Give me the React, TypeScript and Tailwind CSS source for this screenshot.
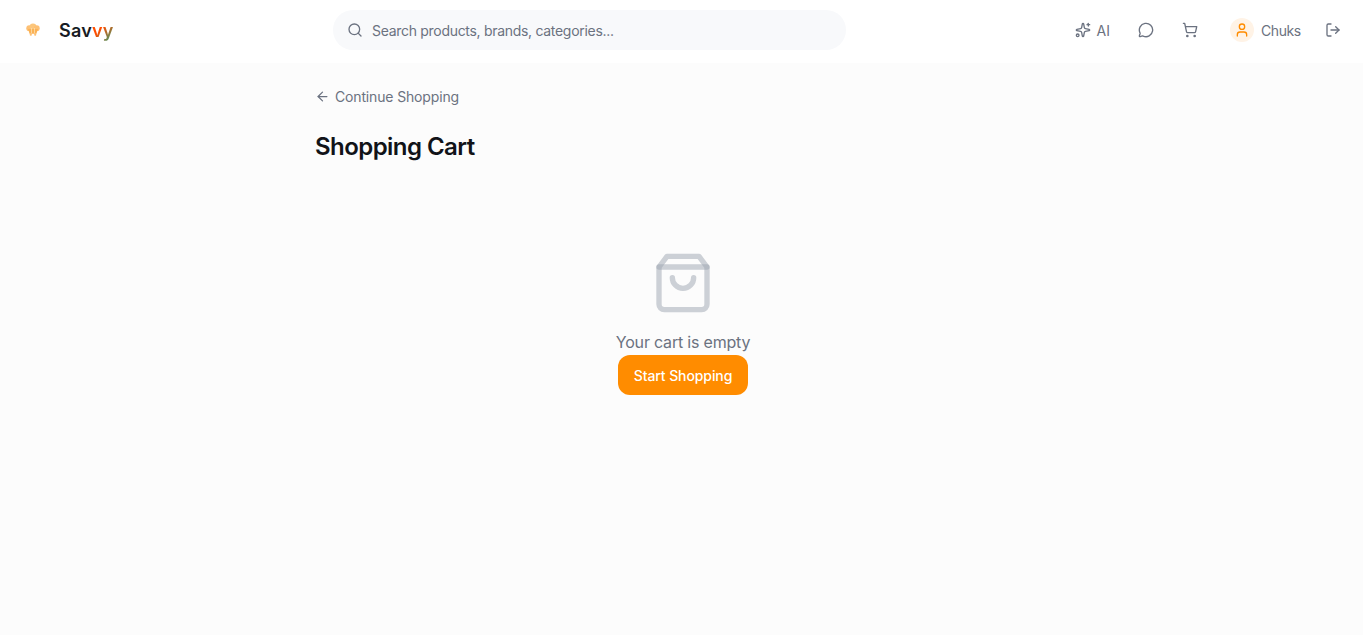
import { ArrowLeft, LogOut, MessageCircle, Search, ShoppingCart, Sparkles, User } from 'lucide-react';

const body = { fontFamily: 'Inter, sans-serif' };

function Logo() {
  return (
    <svg width="16" height="16" viewBox="0 0 16 16" className="shrink-0">
      <circle cx="4.2" cy="6.2" r="2.9" fill="#fdc074" />
      <circle cx="8" cy="4.8" r="3.4" fill="#fcc67c" />
      <circle cx="11.8" cy="6.2" r="2.9" fill="#fdc074" />
      <path d="M3 7h10l-1.6 4.8H4.6z" fill="#fbb255" />
      <path d="M6.5 6v5.4M9.5 6v5.4" stroke="#fde0b0" strokeWidth=".8" />
      <rect x="4.8" y="11" width="2" height="2.8" rx=".8" fill="#fdc074" />
      <rect x="9.2" y="11" width="2" height="2.8" rx=".8" fill="#fdc074" />
    </svg>
  );
}

// strokes are drawn one by one so the overlap on the top seam comes out darker, like the reference
function EmptyBag() {
  return (
    <svg width="64" height="64" viewBox="0 0 24 24" fill="none" stroke="#9ca3af" strokeWidth="2" strokeLinecap="round" strokeLinejoin="round" strokeOpacity=".5">
      <path d="M6 2 3 6v14a2 2 0 0 0 2 2h14a2 2 0 0 0 2-2V6l-3-4Z" />
      <path d="M3 6h18" />
      <path d="M16 10a4 4 0 0 1-8 0" />
    </svg>
  );
}

export default function App() {
  return (
    <div className="min-h-screen bg-[#fcfcfc] flex flex-col" style={body}>
      <header className="h-[63px] bg-white flex items-center pb-[3px] pl-[25px] pr-[22px]">
        <div className="w-[308px] flex items-center gap-[18px]">
          <Logo />
          <span className="text-[18px] font-semibold tracking-[0.2px] text-[#171b24]">
            Sav<span className="bg-[linear-gradient(135deg,#ff4d00_42%,#3d9a6a_95%)] bg-clip-text text-transparent">vy</span>
          </span>
        </div>
        <div className="w-[513px] h-[40px] rounded-full bg-[#f8f9fb] flex items-center pl-[14px] gap-[9px]">
          <Search size={16} className="text-[#6b7280]" />
          <span className="text-[14px] tracking-[-0.3px] text-[#6b7280]">Search products, brands, categories...</span>
        </div>
        <div className="ml-auto flex items-center text-[#6b7280]">
          <Sparkles size={16} />
          <span className="ml-[6px] text-[14px] font-normal">AI</span>
          <MessageCircle size={16} className="ml-[28px]" />
          <ShoppingCart size={16} className="ml-[28px]" />
          <div className="ml-[32px] w-[24px] h-[24px] rounded-full bg-[#fff3e6] flex items-center justify-center">
            <User size={16} className="text-[#ff8c00]" />
          </div>
          <span className="ml-[7px] w-[40px] text-[14px] font-normal tracking-[-0.4px]">Chuks</span>
          <LogOut size={16} className="ml-[24px]" />
        </div>
      </header>
      <main className="w-[736px] ml-[315px] flex flex-col">
        <div className="mt-[23px] flex items-center gap-[5px] text-[#6b7280]">
          <ArrowLeft size={15} />
          <span className="text-[14px] tracking-[-0.15px]">Continue Shopping</span>
        </div>
        <h1 className="mt-[24px] text-[24px] leading-[32px] font-semibold tracking-[-0.55px] text-[#111318]">Shopping Cart</h1>
        <div className="mt-[88px] flex flex-col items-center">
          <EmptyBag />
          <p className="mt-[15px] text-[16px] leading-[24px] tracking-[-0.2px] text-[#6b7280]">Your cart is empty</p>
          <button className="mt-[1px] h-[40px] w-[130px] rounded-[12px] bg-[#ff8c00] text-white text-[14px] font-medium tracking-[-0.1px]">Start Shopping</button>
        </div>
      </main>
    </div>
  );
}
